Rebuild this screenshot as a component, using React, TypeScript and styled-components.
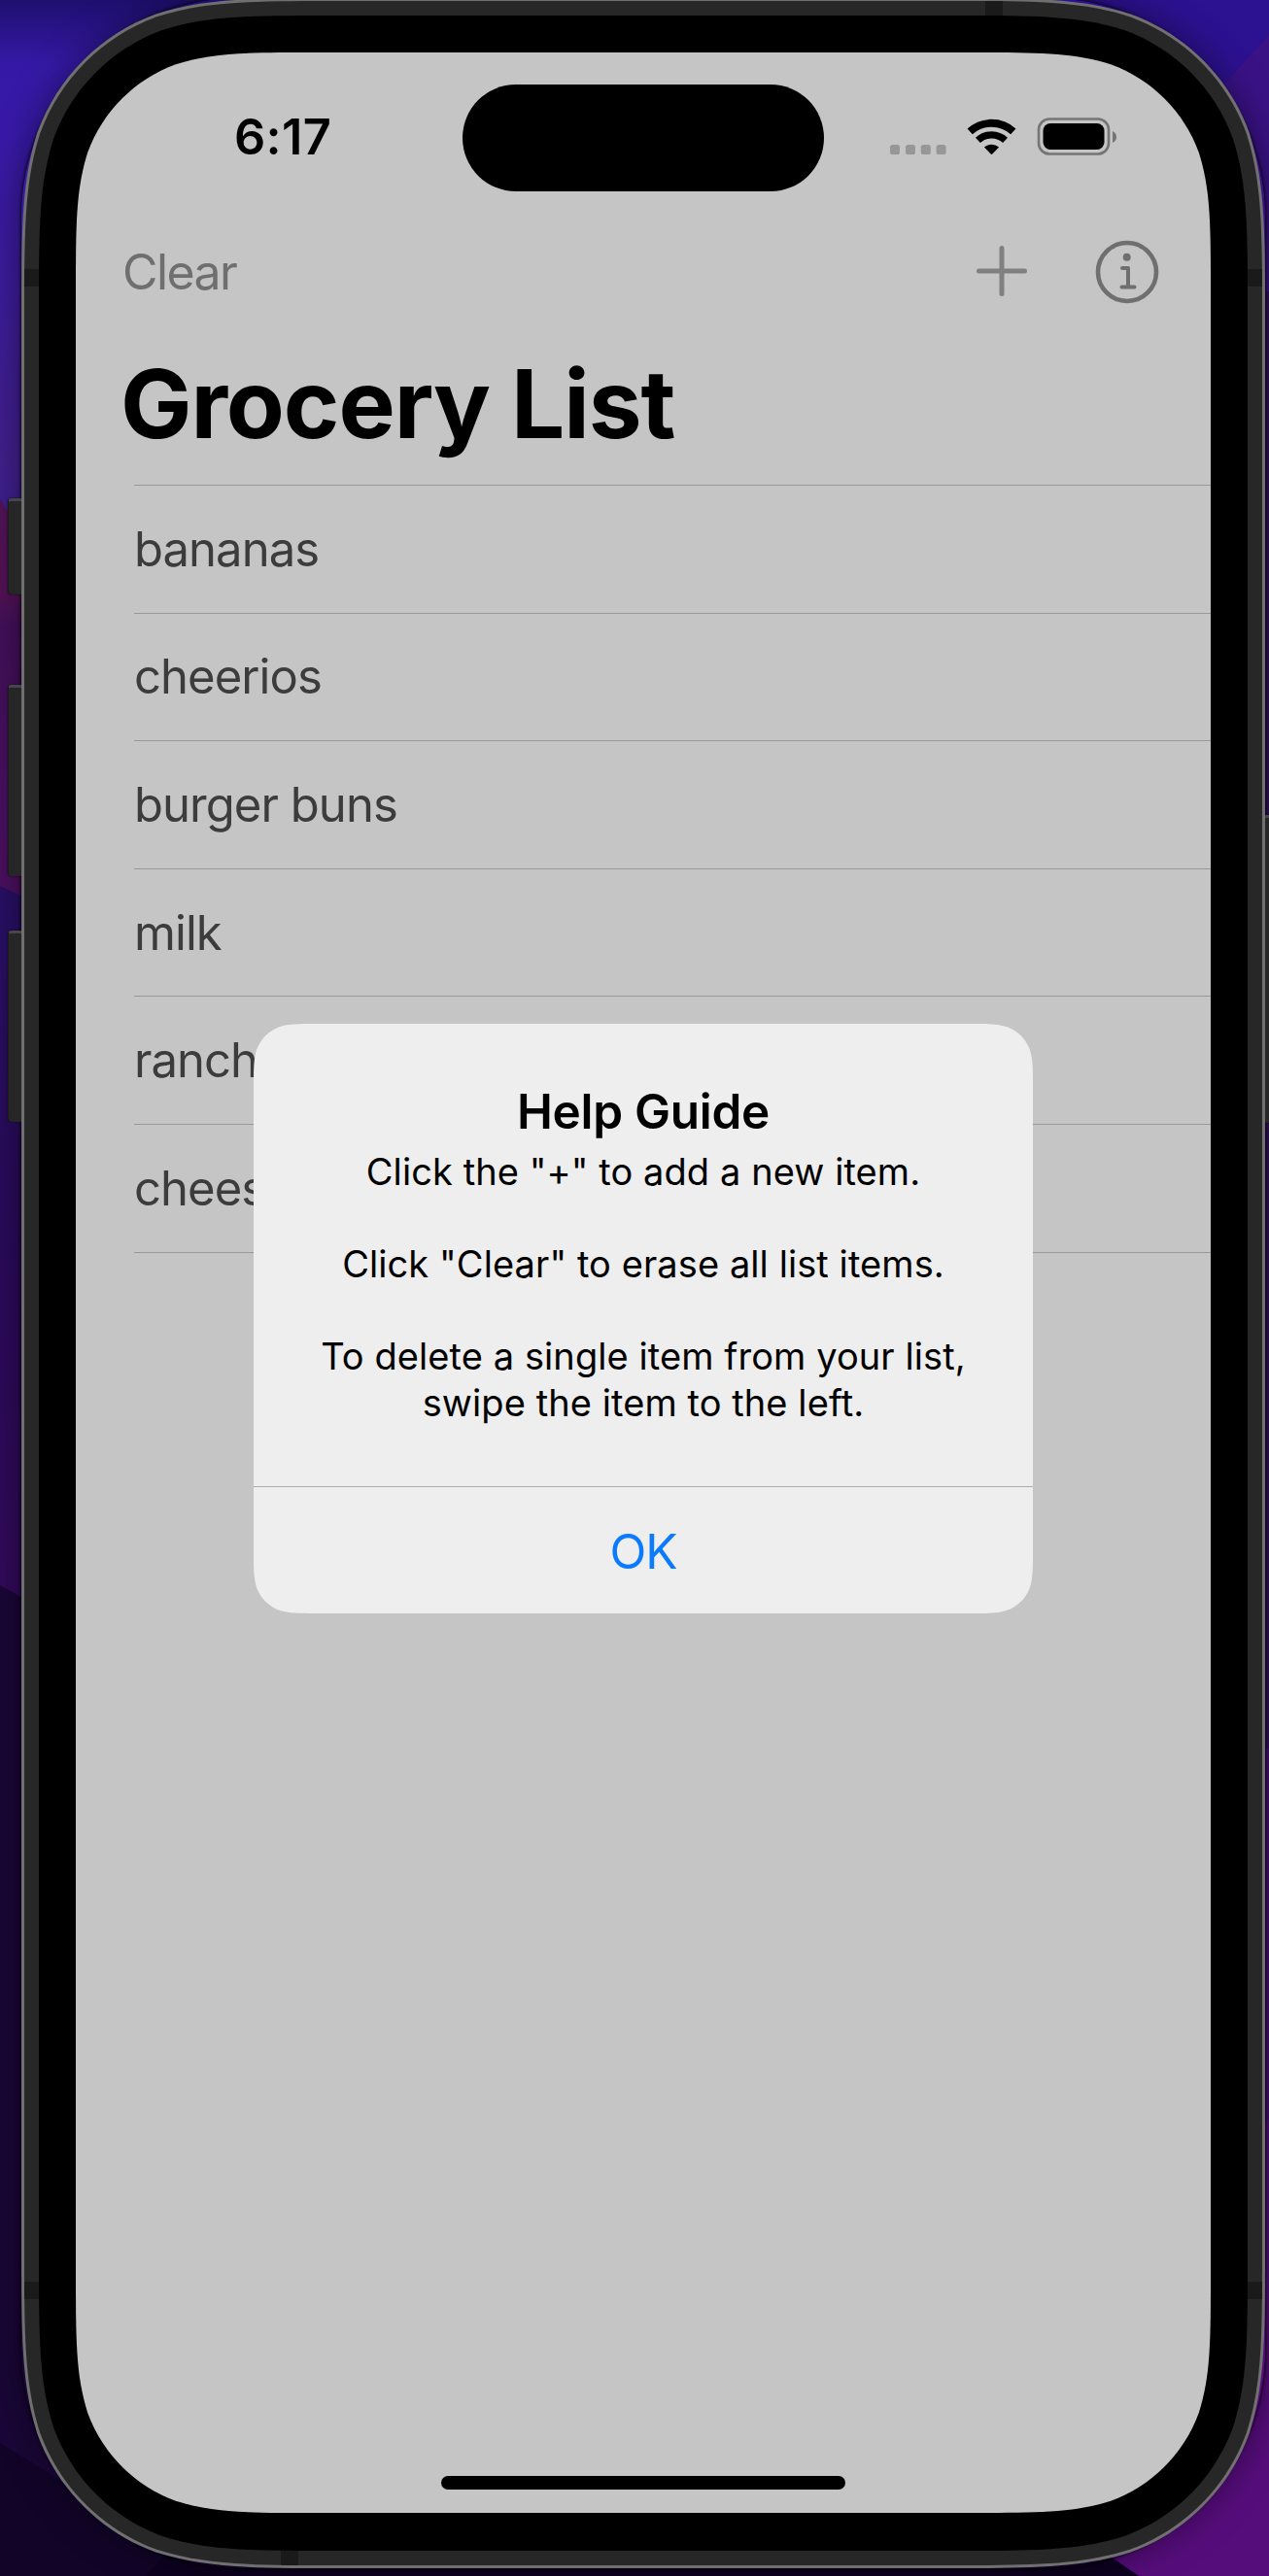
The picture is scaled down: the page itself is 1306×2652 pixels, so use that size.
import React from "react";
import styled, { createGlobalStyle } from "styled-components";

/* Continuous-curvature rounded rectangle, as used by Apple hardware and alerts. */
function squircle(x: number, y: number, w: number, h: number, r: number): string {
  const a = 1.528665 * r;
  const b = 1.088493 * r;
  const c = 0.868407 * r;
  const d = 0.631494 * r;
  const e = 0.074911 * r;
  const f = 0.372824 * r;
  const g = 0.16906 * r;
  const R = x + w;
  const B = y + h;
  return [
    `M${x + a} ${y}L${R - a} ${y}`,
    `C${R - b} ${y} ${R - c} ${y} ${R - d} ${y + e}`,
    `C${R - f} ${y + g} ${R - g} ${y + f} ${R - e} ${y + d}`,
    `C${R} ${y + c} ${R} ${y + b} ${R} ${y + a}`,
    `L${R} ${B - a}`,
    `C${R} ${B - b} ${R} ${B - c} ${R - e} ${B - d}`,
    `C${R - g} ${B - f} ${R - f} ${B - g} ${R - d} ${B - e}`,
    `C${R - c} ${B} ${R - b} ${B} ${R - a} ${B}`,
    `L${x + a} ${B}`,
    `C${x + b} ${B} ${x + c} ${B} ${x + d} ${B - e}`,
    `C${x + f} ${B - g} ${x + g} ${B - f} ${x + e} ${B - d}`,
    `C${x} ${B - c} ${x} ${B - b} ${x} ${B - a}`,
    `L${x} ${y + a}`,
    `C${x} ${y + b} ${x} ${y + c} ${x + e} ${y + d}`,
    `C${x + g} ${y + f} ${x + f} ${y + g} ${x + d} ${y + e}`,
    `C${x + c} ${y} ${x + b} ${y} ${x + a} ${y}Z`,
  ].join("");
}

const clip = (w: number, h: number, r: number) => `path("${squircle(0, 0, w, h, r)}")`;

const GlobalStyle = createGlobalStyle`
  html, body { margin: 0; padding: 0; background: #0b001d; overflow: hidden; }
  * { box-sizing: border-box; }
  button { font: inherit; border: 0; padding: 0; background: none; }
`;

const Desktop = styled.main`
  position: relative;
  width: 1306px;
  height: 2652px;
  overflow: hidden;
  font-family: Inter, "Liberation Sans", sans-serif;
`;

const Wallpaper = styled.svg`
  position: absolute;
  inset: 0;
`;

const SideButton = styled.span<{ $x: number; $y: number; $h: number }>`
  position: absolute;
  left: ${(p) => p.$x}px;
  top: ${(p) => p.$y}px;
  width: 16px;
  height: ${(p) => p.$h}px;
  background: #262626;
  border-top: 3px solid #464646;
  border-left: 1px solid #1c1c1c;
  border-radius: 4px;
  box-shadow: 0 0 2px rgba(0, 0, 0, 0.7);
`;

const Shadow = styled.div`
  position: absolute;
  left: 22px;
  top: -2px;
  width: 1280px;
  height: 2646px;
  border-radius: 225px;
  box-shadow: 0 0 3px 1px rgba(0, 0, 0, 0.75), 0 0 36px 4px rgba(0, 0, 0, 0.4);
`;

const Rim = styled.div`
  position: relative;
  margin: -2px 0 0 22px;
  width: 1280px;
  height: 2646px;
  padding: 3px;
  background: #707070;
  clip-path: ${clip(1280, 2646, 219)};
`;

const Chassis = styled.div`
  position: relative;
  width: 1274px;
  height: 2640px;
  padding: 15px;
  background: #272727;
  clip-path: ${clip(1274, 2640, 216)};
`;

const AntennaBand = styled.i<{ $x: number; $y: number; $w: number; $h: number }>`
  position: absolute;
  left: ${(p) => p.$x}px;
  top: ${(p) => p.$y}px;
  width: ${(p) => p.$w}px;
  height: ${(p) => p.$h}px;
  background: #1a1a1a;
`;

const Bezel = styled.div`
  position: relative;
  width: 1244px;
  height: 2610px;
  padding: 38px;
  background: #000;
  clip-path: ${clip(1244, 2610, 201)};
`;

const Screen = styled.div`
  position: relative;
  width: 1168px;
  height: 2533px;
  background: #c5c5c5;
  clip-path: ${clip(1168, 2533, 163)};
  display: flex;
  flex-direction: column;
`;

const StatusBar = styled.header`
  height: 175px;
  display: grid;
  grid-template-columns: 398px 372px 302px;
  align-items: start;
  padding-top: 33px;
`;

const Time = styled.time`
  margin-top: 24px;
  padding-left: 163px;
  font-size: 50.5px;
  line-height: 60px;
  font-weight: 600;
  letter-spacing: 0.3px;
  color: #000;
`;

const Island = styled.div`
  height: 110px;
  border-radius: 55px;
  background: #000;
`;

const StatusIcons = styled.svg`
  display: block;
  margin-top: 33px;
  justify-self: end;
`;

const NavBar = styled.nav`
  height: 102px;
  display: flex;
  align-items: center;
  padding: 0 53px 0 48px;
`;

const NavActions = styled.div`
  display: flex;
  align-items: center;
  gap: 69px;
`;

const ClearButton = styled.button`
  flex: 1;
  height: 62px;
  text-align: left;
  font-size: 50px;
  line-height: 60px;
  letter-spacing: -1.6px;
  color: #6f6f6f;
`;

const NavIcon = styled.svg`
  display: block;
  flex: none;
`;

const Title = styled.h1`
  margin: 0;
  height: 168px;
  padding: 25px 0 0 46px;
  font-size: 98px;
  line-height: 120px;
  font-weight: 700;
  letter-spacing: -1.1px;
  color: #000;
`;

const List = styled.ul`
  list-style: none;
  margin: 0 0 0 60px;
  padding: 0;
  border-top: 1px solid #999;
`;

const Item = styled.li`
  height: 131.6px;
  border-bottom: 1px solid #999;
  display: flex;
  align-items: center;
  font-size: 49px;
  letter-spacing: -0.95px;
  color: #3c3c3c;
`;

const HomeIndicator = styled.div`
  width: 416px;
  height: 14px;
  margin: auto auto 24px;
  border-radius: 7px;
  background: #000;
`;

const Alert = styled.section`
  position: absolute;
  left: 183px;
  top: 1000px;
  width: 802px;
  height: 607px;
  background: #eeeeee;
  clip-path: ${clip(802, 607, 42)};
  display: flex;
  flex-direction: column;
  text-align: center;
  color: #000;
`;

const AlertBody = styled.div`
  height: 477px;
  padding-top: 60px;
  border-bottom: 1px solid #adadad;
`;

const AlertTitle = styled.h2`
  margin: 0 0 9px;
  font-size: 49.5px;
  line-height: 60px;
  font-weight: 600;
  letter-spacing: -0.3px;
`;

const AlertText = styled.p<{ $gap?: boolean }>`
  margin: ${(p) => (p.$gap ? "47.5px" : "0")} 0 0;
  font-size: 38px;
  line-height: 47.5px;
  letter-spacing: 0.08px;
`;

const OkButton = styled.button`
  flex: 1;
  padding-top: 2px;
  font-size: 49.5px;
  line-height: 60px;
  letter-spacing: -1px;
  color: #0a7aff;
`;

const items = ["bananas", "cheerios", "burger buns", "milk", "ranch", "cheese"];

function Backdrop() {
  return (
    <Wallpaper width="1306" height="2652" viewBox="0 0 1306 2652">
      <defs>
        <linearGradient id="blue" x1="0" y1="0" x2="0" y2="1">
          <stop offset="0" stopColor="#1f0f70" />
          <stop offset="0.12" stopColor="#3519a6" />
          <stop offset="0.25" stopColor="#3819a8" />
          <stop offset="0.85" stopColor="#42208e" />
          <stop offset="1" stopColor="#3b2090" />
        </linearGradient>
        <linearGradient id="plum" x1="0" y1="0" x2="0" y2="1">
          <stop offset="0" stopColor="#521458" />
          <stop offset="0.22" stopColor="#541256" />
          <stop offset="0.3" stopColor="#43105c" />
          <stop offset="1" stopColor="#4d1060" />
        </linearGradient>
        <linearGradient id="violet" x1="0" y1="0" x2="0" y2="1">
          <stop offset="0" stopColor="#281066" />
          <stop offset="0.5" stopColor="#2a0a5a" />
          <stop offset="1" stopColor="#340a5c" />
        </linearGradient>
      </defs>
      <rect width="1306" height="2652" fill="#1a0638" />
      <rect width="700" height="560" fill="url(#blue)" />
      <path d="M0 514L10 529L30 560V950L0 915Z" fill="url(#plum)" />
      <path d="M0 912L60 940V1665L0 1632Z" fill="url(#violet)" />
      <path d="M0 2515L220 2652H0Z" fill="#120428" />
      <rect x="700" width="606" height="400" fill="#2c1190" />
      <path d="M1306 36L1225 125V420H1306Z" fill="#3a1286" />
      <rect x="1290" y="300" width="16" height="1500" fill="#34105e" />
      <rect x="1290" y="1800" width="16" height="852" fill="#480e70" />
      <path d="M1306 2180V2652H1172L1090 2595Z" fill="#560d7c" />
      <path d="M200 2600H1090L1172 2652H150Z" fill="#0e0222" />
    </Wallpaper>
  );
}

function SignalWifiBattery() {
  return (
    <StatusIcons width="236" height="44" viewBox="0 0 236 44">
      <g fill="#979797">
        <rect x="2" y="29" width="10" height="10" rx="2.6" />
        <rect x="18" y="29" width="10" height="10" rx="2.6" />
        <rect x="33.8" y="29" width="10" height="10" rx="2.6" />
        <rect x="49.6" y="29" width="10" height="10" rx="2.6" />
      </g>
      <g fill="none" stroke="#000">
        <path d="M84.2 15.4A33 33 0 0 1 128.8 15.4" strokeWidth="7.8" />
        <path d="M92.4 24.4A20.7 20.7 0 0 1 120.6 24.4" strokeWidth="7.2" />
      </g>
      <path d="M98.9 31.4A12 12 0 0 1 114.1 31.4L107.3 38.6Q106.500 39.300 105.700 38.600Z" fill="#000" />
      <rect x="155" y="2.500" width="72" height="36" rx="11" fill="none" stroke="#757575" strokeWidth="2.600" />
      <rect x="159.500" y="7" width="63" height="27" rx="7.500" fill="#000" />
      <path d="M231 15q4 2 4 6t-4 6Z" fill="#757575" />
    </StatusIcons>
  );
}

export default function App() {
  return (
    <>
      <GlobalStyle />
      <Desktop>
        <Backdrop />
        <Shadow />
        <SideButton $x={8} $y={513} $h={99} />
        <SideButton $x={8} $y={705} $h={197} />
        <SideButton $x={8} $y={958} $h={197} />
        <SideButton $x={1300} $y={839} $h={317} />
        <Rim>
          <Chassis>
            <AntennaBand $x={0} $y={276} $w={15} $h={18} />
            <AntennaBand $x={1259} $y={276} $w={15} $h={18} />
            <AntennaBand $x={0} $y={2348} $w={15} $h={18} />
            <AntennaBand $x={1259} $y={2348} $w={15} $h={18} />
            <AntennaBand $x={989} $y={0} $w={18} $h={15} />
            <AntennaBand $x={264} $y={2625} $w={18} $h={15} />
            <Bezel>
              <Screen>
                <StatusBar>
                  <Time>6:17</Time>
                  <Island />
                  <SignalWifiBattery />
                </StatusBar>
                <NavBar>
                  <ClearButton>Clear</ClearButton>
                  <NavActions>
                    <NavIcon width="54" height="54" viewBox="0 0 54 54">
                      <path
                        d="M27 2.500V49.500M3.500 26H50.500"
                        fill="none"
                        stroke="#808080"
                        strokeWidth="5"
                        strokeLinecap="round"
                      />
                    </NavIcon>
                    <NavIcon width="66" height="66" viewBox="0 0 66 66">
                      <circle cx="33" cy="33" r="30" fill="none" stroke="#6f6f6f" strokeWidth="4.600" />
                      <circle cx="32.700" cy="17.700" r="4" fill="#6f6f6f" />
                      <path
                        d="M28 29H34V48.500M27.500 48.500H40.500"
                        fill="none"
                        stroke="#6f6f6f"
                        strokeWidth="4"
                        strokeLinecap="round"
                        strokeLinejoin="round"
                      />
                    </NavIcon>
                  </NavActions>
                </NavBar>
                <Title>Grocery List</Title>
                <List>
                  {items.map((item) => (
                    <Item key={item}>{item}</Item>
                  ))}
                </List>
                <HomeIndicator />
                <Alert role="alertdialog">
                  <AlertBody>
                    <AlertTitle>Help Guide</AlertTitle>
                    <AlertText>Click the "+" to add a new item.</AlertText>
                    <AlertText $gap>Click "Clear" to erase all list items.</AlertText>
                    <AlertText $gap>
                      To delete a single item from your list,
                      <br />
                      swipe the item to the left.
                    </AlertText>
                  </AlertBody>
                  <OkButton>OK</OkButton>
                </Alert>
              </Screen>
            </Bezel>
          </Chassis>
        </Rim>
      </Desktop>
    </>
  );
}
